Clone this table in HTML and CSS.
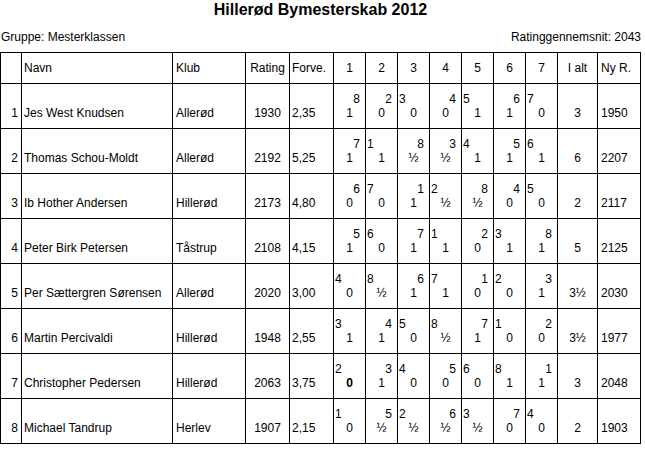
FILE: index.html
```html
<!DOCTYPE html>
<html lang="da">
<head>
<meta charset="utf-8">
<title>Hillerød Bymesterskab 2012</title>
<link rel="stylesheet" href="styles.css">
</head>
<body>
<div class="page">
  <h1 class="title">Hillerød Bymesterskab 2012</h1>
  <div class="meta">
    <span>Gruppe: Mesterklassen</span>
    <span>Ratinggennemsnit: 2043</span>
  </div>
  <div class="grid" id="grid">
    <div class="h"></div>
    <div class="h left2">Navn</div>
    <div class="h left3">Klub</div>
    <div class="h">Rating</div>
    <div class="h left2">Forve.</div>
    <div class="h">1</div>
    <div class="h">2</div>
    <div class="h">3</div>
    <div class="h">4</div>
    <div class="h">5</div>
    <div class="h">6</div>
    <div class="h">7</div>
    <div class="h">I alt</div>
    <div class="h left3">Ny R.</div>
  </div>
</div>
<script src="app.js"></script>
</body>
</html>
```
FILE: app.js
```js
const rows = [
  ["1","Jes West Knudsen","Allerød","1930","2,35",[["8","r","1"],["2","r","0"],["3","l","0"],["4","r","0"],["5","l","1"],["6","r","1"],["7","l","0"]],"3","1950"],
  ["2","Thomas Schou-Moldt","Allerød","2192","5,25",[["7","r","1"],["1","l","1"],["8","r","½"],["3","r","½"],["4","l","1"],["5","r","1"],["6","l","1"]],"6","2207"],
  ["3","Ib Hother Andersen","Hillerød","2173","4,80",[["6","r","0"],["7","l","0"],["1","r","1"],["2","l","½"],["8","r","½"],["4","r","0"],["5","l","0"]],"2","2117"],
  ["4","Peter Birk Petersen","Tåstrup","2108","4,15",[["5","r","1"],["6","l","0"],["7","r","1"],["1","l","1"],["2","r","0"],["3","l","1"],["8","r","1"]],"5","2125"],
  ["5","Per Sættergren Sørensen","Allerød","2020","3,00",[["4","l","0"],["8","l","½"],["6","r","1"],["7","l","1"],["1","r","0"],["2","l","0"],["3","r","1"]],"3½","2030"],
  ["6","Martin Percivaldi","Hillerød","1948","2,55",[["3","l","1"],["4","r","1"],["5","l","0"],["8","l","½"],["7","r","1"],["1","l","0"],["2","r","0"]],"3½","1977"],
  ["7","Christopher Pedersen","Hillerød","2063","3,75",[["2","l","0","b"],["3","r","1"],["4","l","0"],["5","r","0"],["6","l","0"],["8","l","1"],["1","r","1"]],"3","2048"],
  ["8","Michael Tandrup","Herlev","1907","2,15",[["1","l","0"],["5","r","½"],["2","l","½"],["6","r","½"],["3","l","½"],["7","r","0"],["4","l","0"]],"2","1903"]
];
const grid = document.getElementById("grid");
function cell(cls, text) {
  const c = document.createElement("div");
  c.className = "c " + cls;
  const v = document.createElement("div");
  v.className = "v";
  v.textContent = text;
  c.appendChild(v);
  grid.appendChild(c);
}
rows.forEach(r => {
  cell("num", r[0]);
  cell("left2", r[1]);
  cell("left3", r[2]);
  cell("center", r[3]);
  cell("left2", r[4]);
  r[5].forEach(g => {
    const c = document.createElement("div");
    c.className = "c round";
    const o = document.createElement("div");
    o.className = "opp " + g[1];
    o.textContent = g[0];
    const v = document.createElement("div");
    v.className = "res" + (g[3] ? " bold" : "");
    v.textContent = g[2];
    c.appendChild(o);
    c.appendChild(v);
    grid.appendChild(c);
  });
  cell("center", r[6]);
  cell("left3", r[7]);
});
```
FILE: styles.css
```css
* { box-sizing: border-box; }
body {
  margin: 0;
  background: #fff;
  color: #000;
  font-family: "Liberation Sans", Arial, sans-serif;
  font-size: 12px;
}
.page {
  width: 641px;
  padding-top: 1px;
}
.title {
  margin: 0;
  font-size: 16px;
  line-height: 18px;
  font-weight: bold;
  text-align: center;
}
.meta {
  display: flex;
  justify-content: space-between;
  margin-top: 11px;
  line-height: 14px;
  padding-left: 1px;
}
.grid {
  margin-top: 8px;
  display: grid;
  grid-template-columns: 21px 151px 73px 44px 44px repeat(7, 32px) 40px 43px;
  grid-template-rows: 31px repeat(8, 45px);
  border-left: 1px solid #000;
  border-top: 1px solid #000;
  width: 641px;
}
.h, .c {
  border-right: 1px solid #000;
  border-bottom: 1px solid #000;
}
.h {
  display: flex;
  align-items: center;
  justify-content: center;
  line-height: 14px;
  white-space: nowrap;
}
.h.left2 { justify-content: flex-start; padding-left: 2px; }
.h.left3 { justify-content: flex-start; padding-left: 3px; }
.c {
  display: grid;
  grid-template-rows: 14px 14px;
  align-content: center;
  line-height: 14px;
  white-space: nowrap;
}
.c .v { grid-row: 2; }
.c.num { text-align: right; padding-right: 3px; }
.c.left2 { padding-left: 2px; }
.c.left3 { padding-left: 3px; }
.c.center { text-align: center; }
.round .opp.r { text-align: right; padding-right: 5px; }
.round .opp.l { text-align: left; padding-left: 1px; }
.round .res { text-align: center; }
.round .res.bold { font-weight: bold; }
```
